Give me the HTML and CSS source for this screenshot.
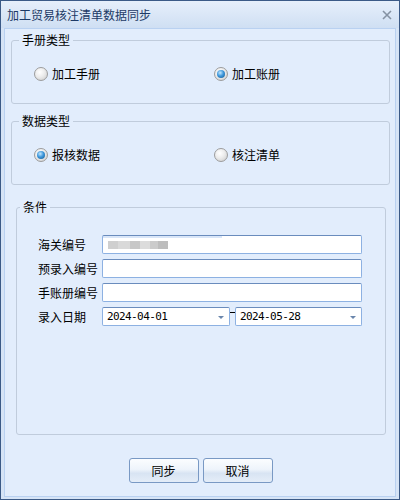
FILE: index.html
```html
<!DOCTYPE html>
<html lang="zh-CN">
<head>
    <meta charset="UTF-8">
    <meta name="viewport" content="width=device-width, initial-scale=1.0">
    <title>加工贸易核注清单数据同步</title>
    <link rel="stylesheet" href="styles.css">
</head>
<body>
    <div class="window">
        <div class="titlebar">
            <span class="title">加工贸易核注清单数据同步</span>
            <svg class="close" width="10" height="10" viewBox="0 0 10 10">
                <path d="M1 1 L9 9 M9 1 L1 9" stroke="#8592a3" stroke-width="1.6" fill="none"/>
            </svg>
        </div>
        <div class="client">
            <fieldset class="group">
                <legend>手册类型</legend>
                <div class="options">
                    <label class="option"><span class="radio"></span>加工手册</label>
                    <label class="option"><span class="radio checked"></span>加工账册</label>
                </div>
            </fieldset>

            <fieldset class="group">
                <legend>数据类型</legend>
                <div class="options">
                    <label class="option"><span class="radio checked"></span>报核数据</label>
                    <label class="option"><span class="radio"></span>核注清单</label>
                </div>
            </fieldset>

            <fieldset class="group conditions">
                <legend>条件</legend>
                <div class="form">
                    <span class="label">海关编号</span>
                    <div class="field first"><span class="masked"></span></div>
                    <span class="label">预录入编号</span>
                    <div class="field"></div>
                    <span class="label">手账册编号</span>
                    <div class="field"></div>
                    <span class="label">录入日期</span>
                    <div class="dates">
                        <div class="field date"><span>2024-04-01</span><i class="arrow"></i></div>
                        <span class="dash"></span>
                        <div class="field date"><span>2024-05-28</span><i class="arrow"></i></div>
                    </div>
                </div>
            </fieldset>

            <div class="buttons">
                <button class="btn">同步</button>
                <button class="btn">取消</button>
            </div>
        </div>
    </div>
</body>
</html>
```

FILE: styles.css
```css
body {
    margin: 0;
    padding: 0;
    font-family: "Noto Sans CJK SC", "Noto Sans", sans-serif;
    font-size: 12px;
    color: #000000;
}

.window {
    width: 400px;
    height: 500px;
    box-sizing: border-box;
    border: 1px solid #3b5a87;
    background-color: #d6e4f6;
    display: flex;
    flex-direction: column;
}

.titlebar {
    height: 27px;
    padding: 0 7px 0 6px;
    display: flex;
    align-items: center;
    justify-content: space-between;
    background: linear-gradient(#e6effb, #cfdff3);
}
.title {
    color: #1d3a66;
    font-size: 12px;
    line-height: 14px;
}

.client {
    flex: 1;
    margin: 0 3px 2px;
    border: 1px solid #b9d1f1;
    background-color: #e2edfc;
    padding: 4px 5px 0 6px;
}

.group {
    margin: 0;
    padding: 0;
    border: 1px solid #c0ccdc;
    border-radius: 3px;
}
.group + .group {
    margin-top: 10px;
}
.group legend {
    margin-left: 7px;
    padding: 0 3px;
    line-height: 14px;
}

.options {
    display: grid;
    grid-template-columns: 180px 1fr;
    padding: 20px 0 22px 22px;
}
.option {
    display: flex;
    align-items: center;
    gap: 4px;
    height: 14px;
    line-height: 14px;
}

.radio {
    width: 12px;
    height: 12px;
    border: 1px solid #9c9c9c;
    border-radius: 50%;
    background: radial-gradient(circle at 40% 35%, #ffffff 0, #ececec 45%, #c8c8c8 100%);
    display: flex;
    align-items: center;
    justify-content: center;
}
.radio.checked::after {
    content: "";
    width: 8px;
    height: 8px;
    border-radius: 50%;
    background: radial-gradient(circle at 40% 35%, #c4e8ff 0, #3f98dc 45%, #0f568f 100%);
}

.group.conditions {
    margin: 15px 4px 0 5px;
}
.conditions legend {
    margin-left: 3px;
}

.form {
    display: grid;
    grid-template-columns: 64px 1fr;
    grid-auto-rows: 19px;
    row-gap: 5px;
    padding: 21px 23px 108px 21px;
}
.label {
    line-height: 19px;
}

.field {
    box-sizing: border-box;
    height: 19px;
    background-color: #ffffff;
    border: 1px solid #8db1e2;
    border-top-color: #6a8cbd;
    border-radius: 2px;
    display: flex;
    align-items: center;
}
.field.first {
    padding-left: 5px;
    background: linear-gradient(#d9e6f8, #d9e6f8) no-repeat 0 0 / 119px 2px, #ffffff;
}
.masked {
    width: 60px;
    height: 8px;
    background: linear-gradient(90deg, #cfcfcf 0 10px, #d9d9d9 10px 22px, #c7c7c7 22px 32px, #dcdcdc 32px 42px, #cbcbcb 42px 50px, #bdbdbd 50px 60px);
}

.dates {
    display: flex;
}
.field.date {
    width: 128px;
    padding: 0 5px 0 4px;
    justify-content: space-between;
    font-family: "DejaVu Sans Mono", "Liberation Mono", monospace;
    font-size: 11px;
    letter-spacing: -0.6px;
}
.field.date + .dash + .field.date {
    width: auto;
    flex: 1;
}
.dash {
    width: 5px;
}
.dash::before {
    content: "";
    display: block;
    margin-top: 5px;
    height: 1px;
    background-color: #000000;
}
.arrow {
    width: 0;
    height: 0;
    border-left: 3px solid transparent;
    border-right: 3px solid transparent;
    border-top: 3px solid #6a86ac;
    margin-top: 2px;
}

.buttons {
    display: flex;
    justify-content: center;
    gap: 4px;
    margin-top: 23px;
}
.btn {
    width: 70px;
    height: 25px;
    padding: 0;
    font-family: inherit;
    font-size: 12px;
    color: #000000;
    border: 1px solid #7999c4;
    border-radius: 3px;
    background: linear-gradient(#fbfdff 0%, #eef4fb 45%, #d8e4f3 62%, #e4edf8 100%);
}
```
